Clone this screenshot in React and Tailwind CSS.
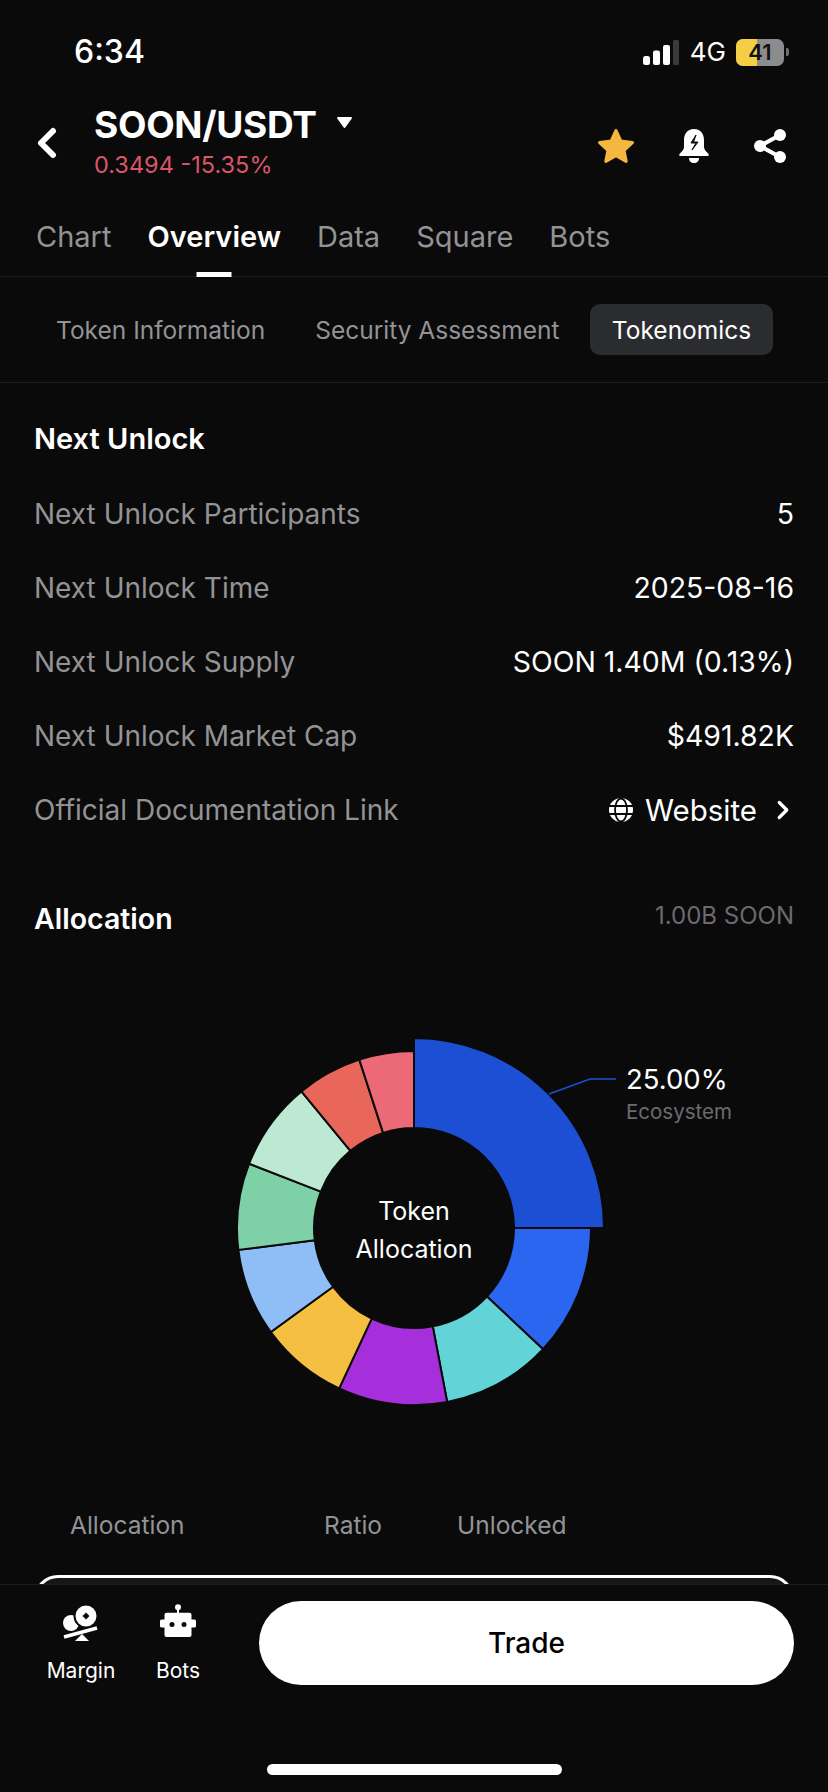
import { ChevronLeft, ChevronRight } from 'lucide-react'

const mainTabs = ['Chart', 'Overview', 'Data', 'Square', 'Bots']

const unlockRows = [
  ['Next Unlock Participants', '5'],
  ['Next Unlock Time', '2025-08-16'],
  ['Next Unlock Supply', 'SOON 1.40M (0.13%)'],
  ['Next Unlock Market Cap', '$491.82K'],
]

/* angles are clockwise from 12 o'clock */
const slices = [
  { from: 0, to: 90, r: 190, color: '#1c4fd3' },
  { from: 90, to: 133.2, r: 177, color: '#2b66f0' },
  { from: 133.2, to: 169.2, r: 177, color: '#62d4d8' },
  { from: 169.2, to: 205, r: 177, color: '#a62edb' },
  { from: 205, to: 234, r: 177, color: '#f5bf41' },
  { from: 234, to: 262.9, r: 177, color: '#8fbdf6' },
  { from: 262.9, to: 291.3, r: 177, color: '#7ed0a6' },
  { from: 291.3, to: 320.5, r: 177, color: '#bde9d3' },
  { from: 320.5, to: 342, r: 177, color: '#e9675a' },
  { from: 342, to: 360, r: 177, color: '#ec6a78' },
]

function point(r, deg) {
  const a = (deg * Math.PI) / 180
  return `${(r * Math.sin(a)).toFixed(2)} ${(-r * Math.cos(a)).toFixed(2)}`
}

function slicePath({ from, to, r }) {
  const inner = 100
  return `M${point(inner, from)} L${point(r, from)} A${r} ${r} 0 0 1 ${point(r, to)} L${point(inner, to)} A${inner} ${inner} 0 0 0 ${point(inner, from)} Z`
}

function StatusBar() {
  return (
    <div className="h-[92px] shrink-0 flex items-start justify-between pt-[34px] pl-[74px] pr-[39px]">
      <span className="text-[32px] leading-[36px] font-medium text-white">6:34</span>
      <div className="flex items-center pt-[3px]">
        <svg width="36" height="25" viewBox="0 0 36 25">
          <rect x="0" y="16" width="7" height="9" rx="2.5" fill="#fff" />
          <rect x="10" y="10.5" width="7" height="14.5" rx="2" fill="#fff" />
          <rect x="20" y="5" width="7" height="20" rx="2" fill="#fff" />
          <rect x="30" y="0" width="6" height="25" rx="1.5" fill="#3a3a3c" />
        </svg>
        <span className="ml-[11px] text-[26px] leading-[30px] text-white">4G</span>
        <div className="ml-[10px] relative w-[48px] h-[27px] rounded-[7px] overflow-hidden bg-[#8c8c8e] flex items-center justify-center">
          <div className="absolute left-0 top-0 bottom-0 w-[21px] bg-[#f4cf46]" />
          <span className="relative text-[22px] leading-[27px] font-semibold text-[#111]">41</span>
        </div>
        <div className="ml-[2px] w-[3px] h-[8px] rounded-r-[2px] bg-[#6e6e70]" />
      </div>
    </div>
  )
}

function Header() {
  return (
    <div className="h-[98px] shrink-0 flex items-center pl-[23px] pr-[41px]">
      <ChevronLeft size={48} strokeWidth={3} className="text-white shrink-0 mt-[4px]" />
      <div className="ml-[23px] flex flex-col">
        <div className="flex items-center">
          <span className="text-[37px] leading-[44px] font-bold text-white tracking-[-0.3px]">SOON/USDT</span>
          <svg className="ml-[19px] mb-[4px]" width="17" height="13" viewBox="0 0 17 13">
            <path d="M2 2 H15 L8.5 11 Z" fill="#fff" stroke="#fff" strokeWidth="2" strokeLinejoin="round" />
          </svg>
        </div>
        <span className="mt-[3px] text-[23.5px] leading-[30px] text-[#d9566a]">0.3494 -15.35%</span>
      </div>
      <div className="ml-auto flex items-center gap-[43px] pt-[10px]">
        <svg width="38" height="36" viewBox="0 0 36 34">
          <path
            d="M18 2.5 L22.6 12.4 L33.5 13.8 L25.6 21.2 L27.6 31.5 L18 26.2 L8.4 31.5 L10.4 21.2 L2.5 13.8 L13.4 12.4 Z"
            fill="#f4b73f"
            stroke="#f4b73f"
            strokeWidth="3"
            strokeLinejoin="round"
          />
        </svg>
        <svg width="32" height="36" viewBox="0 0 32 36">
          <path
            d="M16 1 C9 1 6 6.5 6 12 V19 C6 22 3.5 23.5 1.5 26 C0.8 27 1.3 28 2.5 28 H29.5 C30.7 28 31.2 27 30.5 26 C28.5 23.5 26 22 26 19 V12 C26 6.5 23 1 16 1 Z"
            fill="#fff"
          />
          <path d="M11 30 H21 C21 33 19 35 16 35 C13 35 11 33 11 30 Z" fill="#fff" />
          <path d="M18 7 L13 15 H18 L14 22 L20 14 H15.5 Z" fill="#0a0a0b" stroke="#0a0a0b" strokeWidth="1" />
        </svg>
        <svg width="34" height="36" viewBox="0 0 34 36">
          <path d="M27 7 L7 18 L27 29" fill="none" stroke="#fff" strokeWidth="4" />
          <circle cx="27" cy="7" r="6" fill="#fff" />
          <circle cx="7" cy="18" r="6" fill="#fff" />
          <circle cx="27" cy="29" r="6" fill="#fff" />
        </svg>
      </div>
    </div>
  )
}

function MainTabs() {
  return (
    <div className="h-[87px] shrink-0 flex items-start gap-[36px] pl-[36px] pt-[27px] border-b border-[#1e1e20] relative">
      {mainTabs.map(tab => (
        <div key={tab} className="relative h-[60px]">
          <span className={tab === 'Overview' ? 'text-[29px] leading-[40px] font-semibold text-white' : 'text-[29px] leading-[40px] text-[#939395]'}>
            {tab}
          </span>
          {tab === 'Overview' && (
            <div className="absolute left-1/2 -translate-x-1/2 bottom-0 w-[35px] h-[5px] bg-white" />
          )}
        </div>
      ))}
    </div>
  )
}

function SubTabs() {
  return (
    <div className="h-[106px] shrink-0 flex items-center pl-[35px] pr-[55px] border-b border-[#1e1e20] text-[24.5px]">
      <div className="px-[21px] pt-[1px] text-[#939395]">Token Information</div>
      <div className="ml-[8px] px-[21px] pt-[1px] text-[#939395]">Security Assessment</div>
      <div className="ml-auto h-[51px] w-[183px] rounded-[10px] bg-[#2b2c30] text-white flex items-center justify-center pt-[1px]">
        Tokenomics
      </div>
    </div>
  )
}

function Donut() {
  return (
    <div className="relative h-[544px]">
      <svg width="828" height="544" viewBox="-414 -272 828 544" className="block">
        {slices.map(s => (
          <path key={s.from} d={slicePath(s)} fill={s.color} stroke="#0a0a0b" strokeWidth="2" />
        ))}
        <path d="M135 -134 L176 -149 L202 -149" fill="none" stroke="#1c4fd3" strokeWidth="1.5" />
      </svg>
      <div className="absolute left-[314px] top-[236px] w-[200px] text-center text-[25px] leading-[38px] text-white">
        Token
        <br />
        Allocation
      </div>
      <div className="absolute left-[626px] top-[105px] text-[27.5px] leading-[36px] text-white">25.00%</div>
      <div className="absolute left-[626px] top-[142px] text-[20.5px] leading-[28px] text-[#6b6b6e]">Ecosystem</div>
    </div>
  )
}

function BottomBar() {
  return (
    <div className="h-[208px] shrink-0 bg-[#0a0a0b] border-t border-[#1e1e20] relative">
      <div className="flex items-start pl-[34px] pr-[34px] pt-[16px]">
        <div className="w-[94px] flex flex-col items-center">
          <svg width="38" height="40" viewBox="0 0 38 40" className="mt-[1px]">
            <circle cx="9" cy="21" r="8" fill="#fff" />
            <circle cx="24" cy="14" r="11.5" fill="#fff" stroke="#0a0a0b" strokeWidth="2" />
            <path d="M24 10.5 L27.5 14 L24 17.5 L20.5 14 Z" fill="#0a0a0b" />
            <path d="M2 35 L35 26" stroke="#fff" strokeWidth="3.5" />
            <path d="M20 32 L27 39 H13 Z" fill="#fff" />
          </svg>
          <span className="mt-[15px] text-[21px] leading-[28px] text-white">Margin</span>
        </div>
        <div className="ml-[5px] w-[90px] flex flex-col items-center">
          <svg width="36" height="34" viewBox="0 0 36 34" className="mt-[3px]">
            <circle cx="18" cy="3.3" r="3" fill="#fff" />
            <rect x="17" y="4" width="2" height="6" fill="#fff" />
            <rect x="4.5" y="8.7" width="27" height="24.3" rx="2" fill="#fff" />
            <rect x="0" y="15.5" width="36" height="8" rx="1.5" fill="#fff" />
            <circle cx="12" cy="20.5" r="2.5" fill="#0a0a0b" />
            <circle cx="24" cy="20.5" r="2.5" fill="#0a0a0b" />
          </svg>
          <span className="mt-[19px] text-[21px] leading-[28px] text-white">Bots</span>
        </div>
        <div className="ml-auto w-[535px] h-[84px] rounded-[42px] bg-white text-black text-[28px] font-medium flex items-center justify-center">
          Trade
        </div>
      </div>
      <div className="absolute left-[267px] top-[179px] w-[295px] h-[11px] rounded-full bg-white" />
    </div>
  )
}

export default function App() {
  return (
    <div className="w-[828px] h-[1792px] bg-[#0a0a0b] flex flex-col overflow-hidden font-['Inter',sans-serif]">
      <StatusBar />
      <Header />
      <MainTabs />
      <SubTabs />

      <div className="flex-1 min-h-0 overflow-hidden pt-[18px]">
        {/* Next Unlock */}
        <div className="px-[34px]">
          <div className="h-[76px] flex items-center text-[29px] font-semibold text-white">Next Unlock</div>
          {unlockRows.map(([label, value]) => (
            <div key={label} className="h-[74px] flex items-center justify-between text-[28px]">
              <span className="text-[#939395]">{label}</span>
              <span className="text-white text-[28.4px]">{value}</span>
            </div>
          ))}
          <div className="h-[74px] flex items-center justify-between text-[28px]">
            <span className="text-[#939395]">Official Documentation Link</span>
            <div className="flex items-center text-white">
              <svg width="24" height="24" viewBox="0 0 24 24">
                <circle cx="12" cy="12" r="12" fill="#fff" />
                <ellipse cx="12" cy="12" rx="6" ry="11.5" fill="none" stroke="#0a0a0b" strokeWidth="1.8" />
                <path d="M0 8 H24 M0 16 H24" stroke="#0a0a0b" strokeWidth="1.8" />
              </svg>
              <span className="ml-[12px] text-[29.5px]">Website</span>
              <ChevronRight size={30} strokeWidth={2.6} className="ml-[11px] -mr-[4px]" />
            </div>
          </div>

          {/* Allocation */}
          <div className="mt-[35px] h-[74px] flex items-center justify-between">
            <span className="text-[28.5px] font-semibold text-white">Allocation</span>
            <span className="text-[24px] text-[#6b6b6e] -mt-[6px]">1.00B SOON</span>
          </div>
        </div>

        <Donut />

        <div className="h-[50px] pl-[70px] grid grid-cols-[254px_133px_1fr] items-center text-[24.5px] text-[#939395]">
          <span>Allocation</span>
          <span>Ratio</span>
          <span>Unlocked</span>
        </div>

        {/* first row of the table, cut by the bottom bar */}
        <div className="mt-[25px] mx-[34px] h-[60px] rounded-t-[24px] bg-[#17171a] border-t-[3px] border-x-[3px] border-white" />
      </div>

      <BottomBar />
    </div>
  )
}
